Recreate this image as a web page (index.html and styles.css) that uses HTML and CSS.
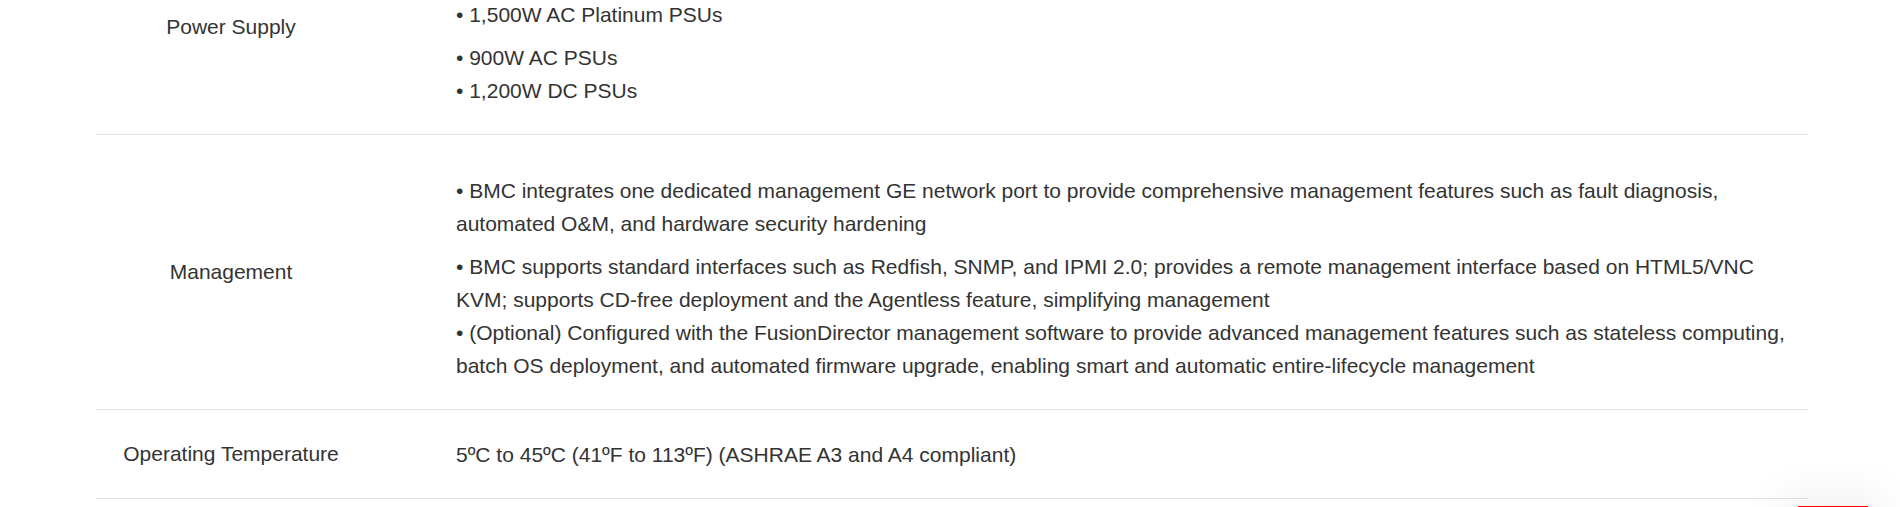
FILE: index.html
```html
<!DOCTYPE html>
<html lang="en">
<head>
    <meta charset="UTF-8">
    <title>Specifications</title>
    <link rel="stylesheet" href="styles.css">
</head>
<body>

<div class="spec-table">
    <div class="spec-row">
        <div class="spec-name">Power Supply</div>
        <div class="spec-value">
            <p>• 2 hot-swappable PSUs in 1+1 redundancy mode. Supported options include:</p>
            <p>• 1,500W AC Platinum PSUs</p>
            • 900W AC PSUs<br>
            • 1,200W DC PSUs
        </div>
    </div>
    <div class="spec-row">
        <div class="spec-name">Management</div>
        <div class="spec-value">
            <p>• BMC integrates one dedicated management GE network port to provide comprehensive management features such as fault diagnosis, automated O&amp;M, and hardware security hardening</p>
            • BMC supports standard interfaces such as Redfish, SNMP, and IPMI 2.0; provides a remote management interface based on HTML5/VNC KVM; supports CD-free deployment and the Agentless feature, simplifying management<br>
            • (Optional) Configured with the FusionDirector management software to provide advanced management features such as stateless computing, batch OS deployment, and automated firmware upgrade, enabling smart and automatic entire-lifecycle management
        </div>
    </div>
    <div class="spec-row">
        <div class="spec-name">Operating Temperature</div>
        <div class="spec-value">5ºC to 45ºC (41ºF to 113ºF) (ASHRAE A3 and A4 compliant)</div>
    </div>
</div>

<a class="float-btn" href="#"></a>

</body>
</html>
```

FILE: styles.css
```css
body {
    margin: 0;
    font-family: "Liberation Sans", Arial, sans-serif;
    font-size: 21px;
    color: #333;
    background: #fff;
    overflow: hidden;
}
.spec-table {
    width: 1712px;
    margin: -79.5px 0 0 96px;
}
.spec-row {
    display: grid;
    grid-template-columns: 270px 1fr;
    border-bottom: 1px solid #e1e1e7;
}
.spec-name {
    align-self: center;
    text-align: center;
}
.spec-value {
    padding: 28px 12px 27px 90px;
    line-height: 33px;
}
.spec-row:first-child .spec-value {
    padding-top: 23px;
}
.spec-value p {
    margin: 10.5px 0;
}
.float-btn {
    position: fixed;
    right: 32px;
    bottom: -47px;
    width: 70px;
    height: 48px;
    background: #f00;
    box-shadow: 0 0 40px 16px rgba(0,0,0,0.05);
}
```
